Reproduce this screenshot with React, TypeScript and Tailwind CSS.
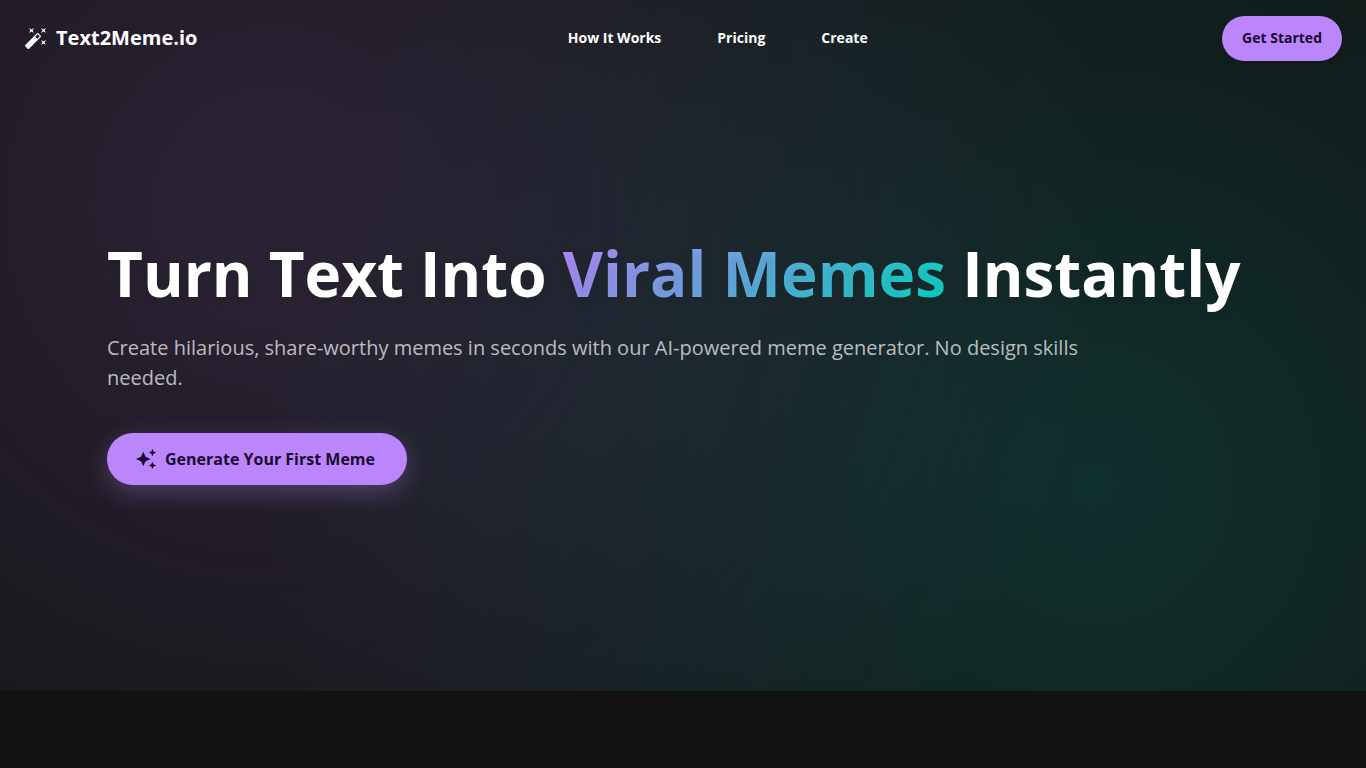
import { MdAutoAwesome, MdAutoFixHigh } from "react-icons/md";

const NAV_LINKS = [
  { label: "How It Works", href: "#how-it-works" },
  { label: "Pricing", href: "#pricing" },
  { label: "Create", href: "#create" },
];

function Header() {
  return (
    <header className="absolute inset-x-0 top-0 z-10 flex items-center justify-between px-6 py-4">
      <a href="#" className="flex items-center gap-2 pr-4 pb-px text-xl font-bold">
        <MdAutoFixHigh className="size-6" />
        Text2Meme.io
      </a>

      <nav className="flex items-center gap-14 pb-px text-sm font-bold">
        {NAV_LINKS.map((link) => (
          <a key={link.href} href={link.href}>
            {link.label}
          </a>
        ))}
      </nav>

      <button
        type="button"
        className="rounded-full bg-[#bb86fc] px-5 pt-3 pb-[13px] text-sm leading-5 font-bold text-[#1a0b2e] shadow-md"
      >
        Get Started
      </button>
    </header>
  );
}

function Hero() {
  return (
    <section className="flex min-h-[90vh] items-center bg-[radial-gradient(circle_at_20%_30%,rgba(187,134,252,0.15)_0%,transparent_70%),radial-gradient(circle_at_80%_70%,rgba(3,218,198,0.15)_0%,transparent_70%)]">
      <div className="mx-auto w-full max-w-[1200px] px-6 pt-[30px]">
        <h1 className="mb-6 text-[62px] leading-[72px] font-bold [text-shadow:0_2px_10px_rgba(0,0,0,0.1)]">
          Turn Text Into{" "}
          <span className="bg-linear-[135deg,#bb86fc,#03dac6] bg-clip-text text-transparent">
            Viral Memes
          </span>{" "}
          Instantly
        </h1>

        <p className="mb-10 max-w-[1000px] text-xl leading-[30px] text-white/70">
          Create hilarious, share-worthy memes in seconds with our AI-powered meme generator. No
          design skills needed.
        </p>

        <button
          type="button"
          className="flex items-center gap-2 rounded-full bg-[#bb86fc] py-3 pr-8 pl-7 text-base leading-7 font-bold text-[#1a0b2e] shadow-[0_8px_24px_rgba(187,134,252,0.3)]"
        >
          <MdAutoAwesome className="size-[22px]" />
          Generate Your First Meme
        </button>
      </div>
    </section>
  );
}

export default function App() {
  return (
    <div className="relative min-h-screen bg-[#121212] font-['Open_Sans',sans-serif] text-white">
      <Header />
      <main>
        <Hero />
      </main>
    </div>
  );
}
